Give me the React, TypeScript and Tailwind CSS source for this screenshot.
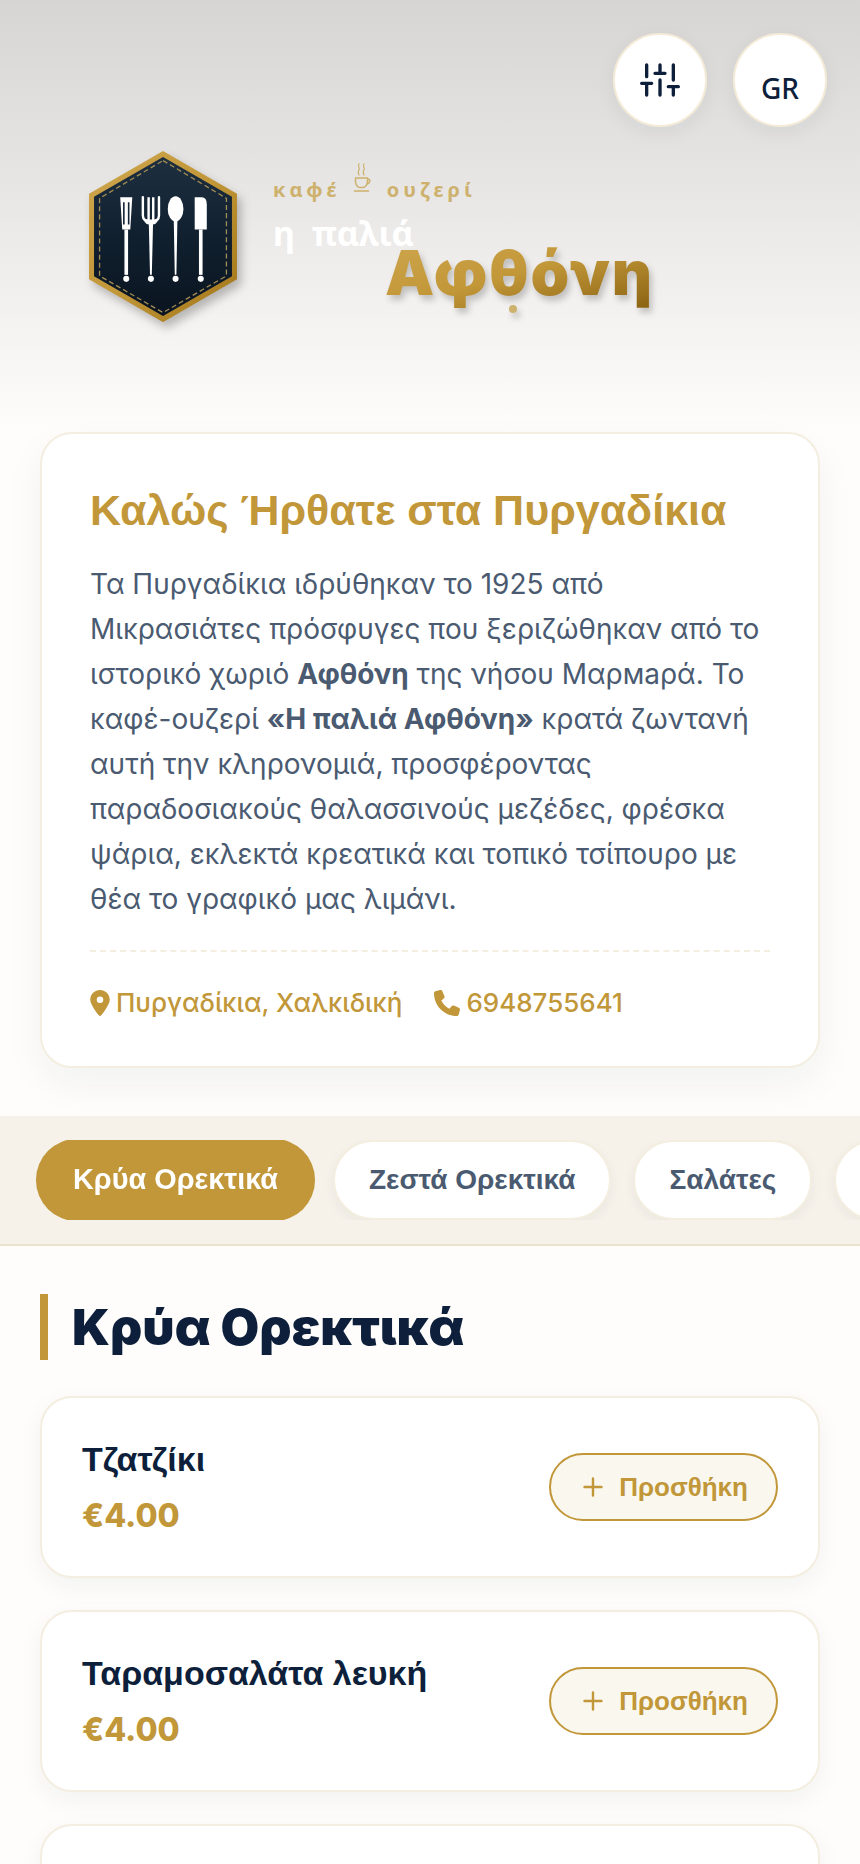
import { useState } from 'react';
import { FaLocationDot, FaPhone } from 'react-icons/fa6';

const categories = ['Κρύα Ορεκτικά', 'Ζεστά Ορεκτικά', 'Σαλάτες', 'Ζυμαρικά'];

const items = [
  { id: 1, name: 'Τζατζίκι', price: 4 },
  { id: 2, name: 'Ταραμοσαλάτα λευκή', price: 4 },
  { id: 3, name: 'Τυροκαυτερή', price: 5 },
];

function SlidersIcon() {
  return (
    <svg
      viewBox="0 0 24 24"
      className="w-10 h-10"
      fill="none"
      stroke="currentColor"
      strokeWidth="2"
      strokeLinecap="round"
      aria-hidden="true"
    >
      <path d="M4 21v-7M4 10V3M12 21v-9M12 8V3M20 21v-5M20 12V3M1 14h6M9 8h6M17 16h6" />
    </svg>
  );
}

function CutleryBadge() {
  return (
    <svg viewBox="0 0 147 170" className="w-37 shrink-0 drop-shadow-[4px_6px_5px_rgba(0,0,0,0.25)]" aria-hidden="true">
      <defs>
        <linearGradient id="goldFrame" x1="0" y1="0" x2="1" y2="1">
          <stop offset="0" stopColor="#cfa64e" />
          <stop offset="0.5" stopColor="#c29738" />
          <stop offset="1" stopColor="#a07418" />
        </linearGradient>
        <linearGradient id="navyFill" x1="0" y1="0" x2="0" y2="1">
          <stop offset="0" stopColor="#1e2f40" />
          <stop offset="0.5" stopColor="#10202f" />
          <stop offset="1" stopColor="#0b1420" />
        </linearGradient>
      </defs>
      <path d="M73.500 0 147 42.500v85L73.500 170 0 127.500v-85z" fill="url(#goldFrame)" />
      <path d="M73.500 6 142 45.500v79L73.500 164 5 124.500v-79z" fill="url(#navyFill)" />
      <path
        d="M73.500 9.500 136.500 47v77L73.500 160.500 10.500 124V47z"
        fill="none"
        stroke="#a08c54"
        strokeWidth="1.300"
        strokeDasharray="5 3"
      />
      <g fill="#fff">
        <path fillRule="evenodd" d="M31 46h12l-2 32h-8zM33.800 51v22h1.600V51zM38.600 51v22h1.600V51z" />
        <path d="M35.200 78h3.600v45h-3.600z" />
        <circle cx="37" cy="127" r="3" />
        <path d="M53.500 46v18q0 6 8 6t8-6V46" fill="none" stroke="#fff" strokeWidth="2.400" strokeLinecap="round" />
        <path d="M58 46h2.400v23H58zM62.600 46H65v23h-2.400z" />
        <path d="M53.500 64q1 9 6 9h4q5 0 6-9l-2 4h-12z" />
        <path d="M59.400 72h4.200l-1.200 51h-1.800z" />
        <circle cx="61.500" cy="127" r="3" />
        <ellipse cx="86" cy="57.500" rx="7.800" ry="12.500" />
        <path d="M84.200 69h3.600l-1 54h-1.600z" />
        <circle cx="86" cy="127" r="3" />
        <path d="M105 46h7q5 0 5 7v25h-12z" />
        <path d="M109.200 78h3.600v45h-3.600z" />
        <circle cx="111" cy="127" r="3" />
      </g>
    </svg>
  );
}

function CoffeeIcon() {
  return (
    <svg
      viewBox="0 0 18 30"
      className="w-[18px] h-[30px] ml-3 mr-4 mb-2"
      fill="none"
      stroke="currentColor"
      strokeWidth="1.500"
      strokeLinecap="round"
      strokeLinejoin="round"
      aria-hidden="true"
    >
      <path d="M6 1c-2 2 1.500 4 0 6s-1 3 0 5M11 1c-2 2 1.500 4 0 6s-1 3 0 5" strokeWidth="1.200" />
      <path d="M2.500 15h12v3.500c0 3-2 6-4.500 6H7c-2.500 0-4.500-3-4.500-6zM14.500 16c4 0 2.500 4.500-.8 5M1.500 28h14" />
    </svg>
  );
}

function MenuItem({ name, price }: { name: string; price: number }) {
  return (
    <li className="flex items-center justify-between gap-6 bg-white border-2 border-[#f4eee0] rounded-[32px] px-10 py-8 shadow-[0_8px_24px_rgba(20,30,60,0.05)]">
      <div>
        <h3 className="text-[34px] leading-[58px] font-bold font-['Liberation_Sans',sans-serif] text-[#0d1f3a]">{name}</h3>
        <p className="text-[32px] leading-[56px] font-extrabold text-[#c19739]">€{price.toFixed(2)}</p>
      </div>
      <button className="flex items-center gap-4 h-[68px] pl-8 pr-7 shrink-0 rounded-full border-2 border-[#c19739] bg-[#faf7ef] text-[#c19739] text-[26px] font-bold font-['Liberation_Sans',sans-serif]">
        <svg
          viewBox="0 0 20 20"
          className="w-5 h-5"
          fill="none"
          stroke="currentColor"
          strokeWidth="2.400"
          strokeLinecap="round"
          aria-hidden="true"
        >
          <path d="M10 1.500v17M1.500 10h17" />
        </svg>
        Προσθήκη
      </button>
    </li>
  );
}

export default function App() {
  const [active, setActive] = useState(categories[0]);

  return (
    <div className="h-screen overflow-hidden bg-[#fefdfb] font-['Inter','Noto_Sans',sans-serif]">
      <header className="bg-linear-to-b from-[#d6d5d3] to-[#fefdfb] pt-[33px] pb-[110px]">
        <div className="flex justify-end gap-[26px] pr-[33px]">
          <button
            aria-label="Φίλτρα"
            className="flex items-center justify-center w-[94px] h-[94px] rounded-full bg-white border-2 border-[#f4ecd8] text-[#0d1f3a] shadow-[0_6px_20px_rgba(20,30,60,0.06)]"
          >
            <SlidersIcon />
          </button>
          <button className="flex items-center justify-center w-[94px] h-[94px] pt-4 rounded-full bg-white border-2 border-[#f4ecd8] text-[#0d1f3a] text-[28px] font-medium font-['Noto_Sans',sans-serif] shadow-[0_6px_20px_rgba(20,30,60,0.06)]">
            GR
          </button>
        </div>

        <div className="flex items-start gap-9 pl-[89px] pt-6">
          <CutleryBadge />
          <div className="flex flex-col items-start pt-3">
            <div className="flex items-end text-[20px] leading-[22px] font-bold tracking-[4px] text-[#cdb16c] font-['Noto_Sans',sans-serif]">
              <span>καφέ</span>
              <CoffeeIcon />
              <span>ουζερί</span>
            </div>
            <p className="mt-2 text-[34px] leading-[48px] font-bold text-white font-['Noto_Sans',sans-serif]">
              <span className="mr-2">η</span> παλιά
            </p>
            <p className="relative -mt-5 ml-28 text-[62px] leading-[72px] font-black tracking-[2px] text-transparent bg-clip-text bg-linear-to-br from-[#cfa64e] via-[#c29738] to-[#8a6210] drop-shadow-[3px_5px_3px_rgba(0,0,0,0.2)]">
              Αφθόνη
              <span className="absolute left-31 -bottom-1 w-2 h-2 rounded-full bg-[#cdb16c]" />
            </p>
          </div>
        </div>
      </header>

      <section className="mx-10 bg-white border-2 border-[#f4eee0] rounded-[32px] px-12 pt-12 pb-11 shadow-[0_16px_40px_rgba(20,30,60,0.05)]">
        <h1 className="text-[43px] leading-[56px] font-bold font-['Liberation_Sans',sans-serif] text-[#c19739]">
          Καλώς Ήρθατε στα Πυργαδίκια
        </h1>
        <p className="mt-6 text-[28px] leading-[45px] text-[#4a5a70]">
          Τα Πυργαδίκια ιδρύθηκαν το 1925 από Μικρασιάτες πρόσφυγες που ξεριζώθηκαν από το ιστορικό χωριό{' '}
          <strong>Αφθόνη</strong> της νήσου Μαρмаρά. Το καφέ-ουζερί <strong>«Η παλιά Αφθόνη»</strong> κρατά ζωντανή
          αυτή την κληρονομιά, προσφέροντας παραδοσιακούς θαλασσινούς μεζέδες, φρέσκα ψάρια, εκλεκτά κρεατικά και
          τοπικό τσίπουρο με θέα το γραφικό μας λιμάνι.
        </p>
        <div className="flex items-center gap-8 mt-7 pt-8 border-t-2 border-dashed border-[#f4eee0] text-[26px] leading-[38px] font-medium text-[#c19739]">
          <span className="flex items-center gap-1.5">
            <FaLocationDot className="w-5" />
            Πυργαδίκια, Χαλκιδική
          </span>
          <a href="tel:6948755641" className="flex items-center gap-1.5">
            <FaPhone />
            6948755641
          </a>
        </div>
      </section>

      <nav className="mt-12 py-6 bg-[#f6f2ea] border-b-2 border-[#e9e1cc]">
        <div className="flex gap-[22px] px-10 overflow-hidden font-['Liberation_Sans',sans-serif]">
          {categories.map((category) => (
            <button
              key={category}
              onClick={() => setActive(category)}
              className={
                category === active
                  ? 'h-20 px-9 shrink-0 rounded-full text-[28px] font-bold scale-[1.03] bg-[#c19739] text-white'
                  : 'h-20 px-[34px] shrink-0 rounded-full text-[28px] font-bold border-2 border-[#f4eee0] bg-white text-[#4a5a70] shadow-[0_4px_12px_rgba(20,30,60,0.05)]'
              }
            >
              {category}
            </button>
          ))}
        </div>
      </nav>

      <main className="px-10 pt-12">
        <h2 className="border-l-8 border-[#c19739] pl-6 text-[50px] leading-[66px] font-black text-[#0d1f3a]">{active}</h2>
        <ul className="flex flex-col gap-8 mt-9">
          {items.map((item) => (
            <MenuItem key={item.id} name={item.name} price={item.price} />
          ))}
        </ul>
      </main>
    </div>
  );
}
